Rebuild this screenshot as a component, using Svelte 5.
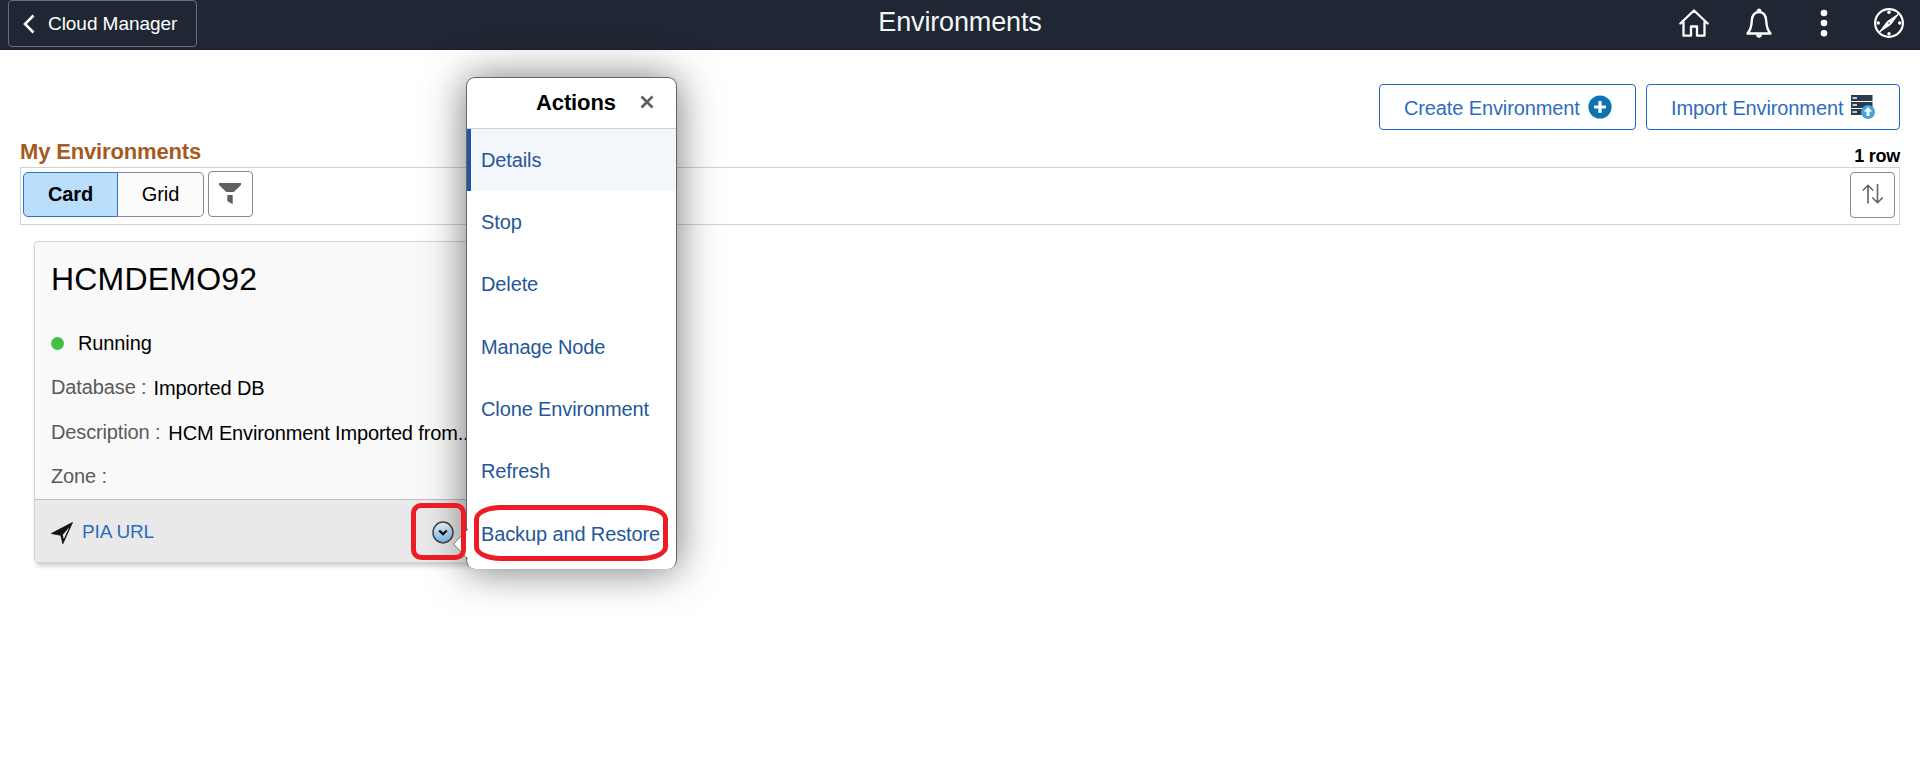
<script>
  const actions = ['Details', 'Stop', 'Delete', 'Manage Node', 'Clone Environment', 'Refresh', 'Backup and Restore'];
  let selected = $state('Details');
</script>

<div class="page">
  <header>
    <button class="back">
      <svg width="12" height="20" viewBox="0 0 12 20"><path d="M10.500 1.500 2 10l8.500 8.500" fill="none" stroke="#fff" stroke-width="2.600" /></svg>
      <span>Cloud Manager</span>
    </button>
    <h1>Environments</h1>
    <nav>
      <svg width="32" height="32" viewBox="0 0 32 32" fill="none" stroke="#fff" stroke-width="2.300" stroke-linejoin="round" stroke-linecap="round">
        <path d="M2.300 16.500 16 3.500l13.700 13M5.500 14.500V28.700h7.500V19.500h6v9.200H26.500V14.500" />
      </svg>
      <svg width="32" height="32" viewBox="0 0 32 32" fill="none" stroke="#fff" stroke-width="2.400" stroke-linejoin="round">
        <path d="M4.500 26.500c3-3.500 4-7 4.200-12C9 8.500 11.500 5 16 5s7 3.500 7.300 9.500c.2 5 1.200 8.500 4.200 12z" />
        <path d="M14 4a2 2 0 0 1 4 0zM13.500 28a2.500 2.300 0 0 0 5 0z" fill="#fff" stroke-width="1" />
      </svg>
      <svg width="32" height="32" viewBox="0 0 32 32" fill="#fff"><circle cx="16" cy="6" r="3.300" /><circle cx="16" cy="16" r="3.300" /><circle cx="16" cy="26.200" r="3.300" /></svg>
      <svg width="32" height="32" viewBox="0 0 32 32" fill="none" stroke="#fff">
        <circle cx="16" cy="16" r="13.900" stroke-width="2.200" />
        <path d="M25.500 7 17.700 17.500 6.500 25 14.300 14.500z" fill="#fff" />
        <circle cx="16" cy="16" r="1" fill="#77808a" stroke="none" />
        <g fill="#fff" stroke="none"><circle cx="16" cy="5.300" r="1.700" /><circle cx="16" cy="26.700" r="1.700" /><circle cx="5.300" cy="16" r="1.700" /><circle cx="26.700" cy="16" r="1.700" /></g>
      </svg>
    </nav>
  </header>

  <main>
    <div class="buttons">
      <button class="create"><span>Create Environment</span>
        <svg width="24" height="24" viewBox="0 0 24 24"><circle cx="12" cy="12" r="11.600" fill="#0d73b0" /><path d="M12 6v12M6 12h12" stroke="#fff" stroke-width="3.200" /></svg>
      </button>
      <button class="import"><span>Import Environment</span>
        <svg width="24" height="24" viewBox="0 0 24 24">
          <path d="M0 0h21.500v6H0zM0 7h21.500v6H0zM0 14h21.500v6H0z" fill="#2b3b4e" />
          <path d="M1.500 3h4.500M1.500 10h4.500M1.500 17h4.500" stroke="#fff" stroke-width="1.700" />
          <circle cx="17" cy="17" r="7" fill="#42a5e0" /><path d="M17 21v-6" stroke="#fff" stroke-width="3" /><path d="m12.800 16.500 4.200-4.500 4.200 4.500z" fill="#fff" />
        </svg>
      </button>
    </div>

    <div class="heading"><h2>My Environments</h2><span>1 row</span></div>

    <div class="toolbar">
      <div class="toggle"><button class="on">Card</button><button>Grid</button></div>
      <button class="square filter">
        <svg width="24" height="22" viewBox="0 0 24 22" fill="#606060"><path d="M1 0h22v2l-7.200 7H8.200L1 2zM9.300 12h5.400v9.200L9.300 18z" /></svg>
      </button>
      <button class="square sort">
        <svg width="22" height="20" viewBox="0 0 22 20" fill="none" stroke="#626262" stroke-width="1.600"><path d="M6 19.500V1.500M.8 6.500 6 1.300l5.200 5.200M15.500 0v18.500M10.300 13.500l5.200 5.200 5.200-5.200" /></svg>
      </button>
    </div>

    <section class="card">
      <div class="body">
        <h3>HCMDEMO92</h3>
        <div class="status"><i></i><span>Running</span></div>
        <dl>
          <div><dt>Database :</dt><dd>Imported DB</dd></div>
          <div class="description"><dt>Description :</dt><dd>HCM Environment Imported from...</dd></div>
          <div class="zone"><dt>Zone :</dt><dd></dd></div>
        </dl>
      </div>
      <footer>
        <svg class="plane" width="22" height="22" viewBox="0 0 22 22"><path d="M21.500.5.300 11.500l9.500 1.800L11.800 21.800z" fill="#111" stroke="#111" stroke-width=".8" stroke-linejoin="round" /><path d="M18.300 5.300 11.800 12.800l.9 4.400z" fill="#e9e9e9" /></svg>
        <span class="link">PIA URL</span>
        <svg class="more" width="22" height="23" viewBox="0 0 22 23">
          <defs><linearGradient id="blue" x1="0" y1="0" x2="0" y2="1"><stop offset="0.100" stop-color="#e8f4fd" /><stop offset="1" stop-color="#79b9ef" /></linearGradient></defs>
          <ellipse cx="11" cy="11.500" rx="10" ry="10.400" fill="url(#blue)" stroke="#454545" stroke-width="1.500" />
          <path d="m7.200 9.500 3.800 3.600 3.800-3.600" fill="none" stroke="#111" stroke-width="2.300" />
        </svg>
      </footer>
    </section>
  </main>

  <aside class="popup">
    <div class="popup-head"><strong>Actions</strong>
      <svg width="14" height="14" viewBox="0 0 14 14"><path d="m1.500 1.500 11 11m0-11-11 11" stroke="#606060" stroke-width="2.700" /></svg>
    </div>
    <ul>
      {#each actions as action}
        <li class:selected={action === selected}><button onclick={() => (selected = action)}>{action}</button></li>
      {/each}
    </ul>
    <svg class="pointer" width="16" height="32" viewBox="0 0 16 32"><path d="M16 0 1.500 15 16 30z" fill="#fff" /><path d="M16 0 1.500 15 16 30" fill="none" stroke="#777" /></svg>
  </aside>
  <div class="mark mark-icon"></div>
  <div class="mark mark-item"></div>
</div>

<style>
  :global(body) { background: #fff; }
  .page { position: relative; width: 1920px; height: 757px; overflow: hidden; font: 20px "Liberation Sans", Arial, sans-serif; letter-spacing: -.12px; color: #000; }
  * { box-sizing: border-box; }
  h1, h2, h3, dl, dd, ul { margin: 0; padding: 0; }
  button { font: inherit; letter-spacing: inherit; color: inherit; padding: 0; margin: 0; background: none; border: 0; }
  svg { display: block; flex: none; }
  header { height: 50px; background: #1e2733; color: #fff; display: grid; grid-template-columns: 1fr auto 1fr; border-bottom: 1px solid #17202b; }
  .back { justify-self: start; margin-left: 8px; width: 189px; height: 47px; border: 1px solid #65707f; border-radius: 4px; display: flex; align-items: center; gap: 13px; padding-left: 14px; font-size: 19px; letter-spacing: -.05px; }
  h1 { font-size: 27px; font-weight: 400; line-height: 45px; color: #f4f6f8; letter-spacing: -.15px; }
  nav { justify-self: end; display: flex; gap: 33px; padding: 7px 15px 0 0; }
  main { padding: 34px 20px 0; }
  .buttons { display: flex; justify-content: flex-end; gap: 10px; }
  .buttons button { height: 46px; border: 1px solid #2168c4; border-radius: 4px; color: #2d6cc0; background: #fff; display: flex; align-items: center; gap: 8px; padding-left: 24px; }
  .create { width: 257px; }
  .import { width: 254px; }
  .buttons span { padding-top: 2px; }
  .heading { height: 37px; display: flex; justify-content: space-between; }
  h2 { color: #a55a1f; font-size: 22px; line-height: 44px; letter-spacing: -.15px; }
  .heading span { font-size: 18px; font-weight: 700; line-height: 53px; letter-spacing: -.25px; }
  .toolbar { height: 58px; border: 1px solid #cdd3da; display: flex; padding: 3px 4px 0 2px; }
  .toggle { display: flex; margin-top: 1px; height: 45px; }
  .toggle button { width: 86px; border: 1px solid #858b93; border-left: 0; border-radius: 0 5px 5px 0; background: #fbfbfb; }
  .toggle .on { width: 95px; border: 1px solid #2b72c8; border-radius: 5px 0 0 5px; background: #badefc; font-weight: 700; }
  .square { width: 45px; height: 46px; border: 1px solid #858b93; border-radius: 4px; display: flex; justify-content: center; padding-top: 11px; background: #fff; }
  .filter { margin-left: 4px; padding-right: 1px; }
  .sort { margin: 1px 0 0 auto; }
  .card { width: 480px; height: 322px; margin: 16px 0 0 14px; border: 1px solid #d2d4d5; border-radius: 4px; background: #f9f9f9; box-shadow: 2px 3px 5px #0003; display: flex; flex-direction: column; overflow: hidden; }
  .body { flex: 1; min-height: 0; padding: 19px 16px 0; }
  h3 { font-size: 32px; line-height: 36px; font-weight: 400; letter-spacing: .2px; }
  .status { display: flex; align-items: center; margin-top: 34px; height: 24px; gap: 14px; }
  .status i { width: 13px; height: 13px; border-radius: 50%; background: #43bf43; }
  .status span { padding-top: 1px; }
  dl div { display: flex; gap: 7px; height: 44px; line-height: 24px; }
  dl { padding-top: 20px; }
  dl .description { padding-top: 1px; gap: 8px; letter-spacing: -.14px; }
  dl .zone { padding-top: 1px; }
  dt { color: #5a5a5a; }
  dd { padding-top: 1px; white-space: nowrap; }
  footer { flex: none; height: 63px; border-top: 1px solid #bcbcbc; background: #e9e9e9; display: flex; align-items: center; padding-left: 16px; }
  .plane { margin-top: 3px; }
  .link { color: #2d6cc0; margin-left: 9px; font-size: 19px; line-height: 24px; padding-top: 1px; }
  .more { margin: 3px 59px 0 auto; }
  .popup { position: absolute; left: 466px; top: 77px; width: 211px; height: 492px; background: #fff; border: 1px solid #666; border-bottom: 0; border-radius: 9px; box-shadow: 0 1px 42px rgba(0, 0, 0, .55); }
  .popup-head { height: 51px; border-bottom: 1px solid #cbd3db; display: flex; align-items: center; font-size: 22px; padding: 0 22px 1px 69px; justify-content: space-between; }
  .popup-head svg { margin-top: -1px; }
  ul { list-style: none; }
  li { height: 62.330px; display: flex; border-left: 4px solid transparent; padding-left: 10px; color: #24569b; }
  .selected { background: #f3f7fc; border-left-color: #22569e; }
  .pointer { position: absolute; left: -15px; top: 451px; }
  .mark { position: absolute; border: 5px solid #ed1c24; }
  .mark-icon { left: 411px; top: 503px; width: 55px; height: 57px; border-radius: 10px; }
  .mark-item { left: 474px; top: 505px; width: 194px; height: 56px; border-radius: 27px / 14px; }
</style>
